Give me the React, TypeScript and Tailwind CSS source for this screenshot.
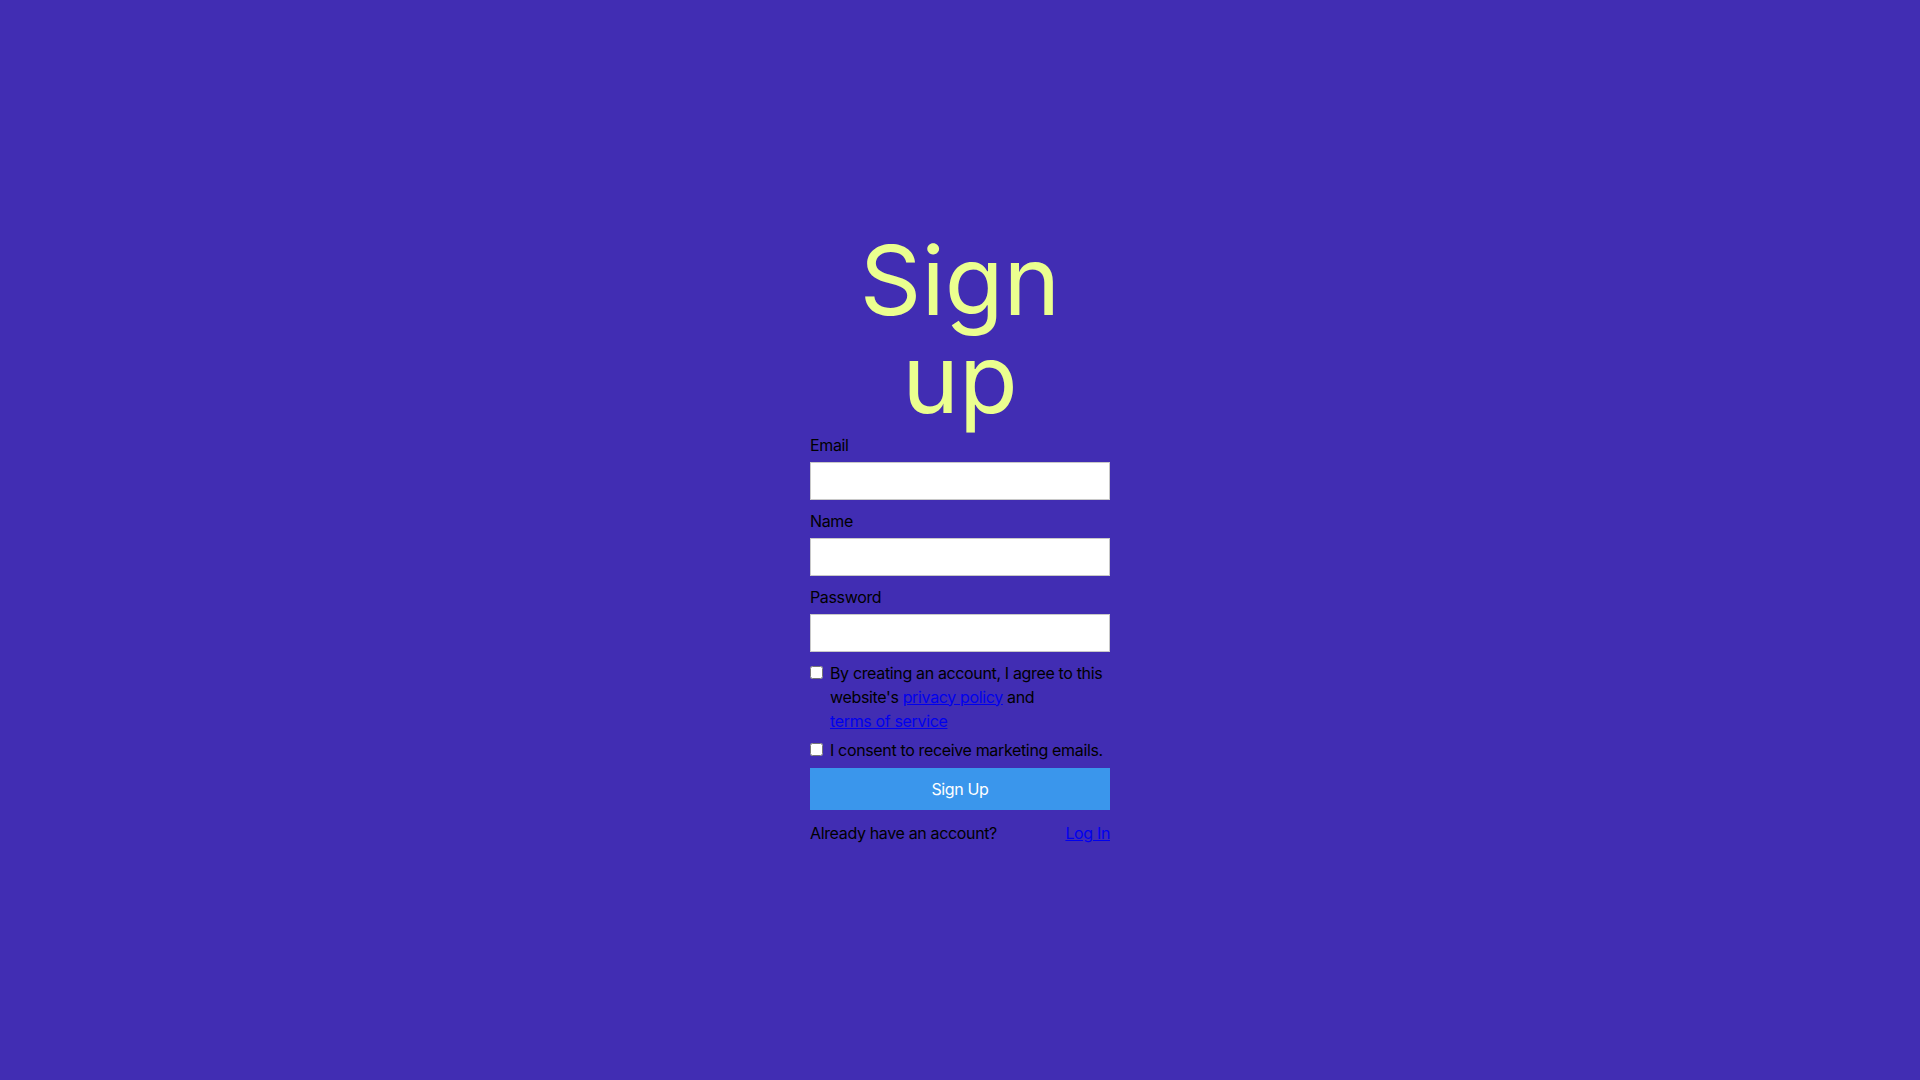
const fields = [
  { id: "email", label: "Email", type: "email" },
  { id: "name", label: "Name", type: "text" },
  { id: "password", label: "Password", type: "password" },
];

const App = () => {
  return (
    <div
      className="min-h-screen w-full bg-[#412db3] flex items-center justify-center text-black"
      style={{ fontFamily: "Inter, 'Noto Sans', sans-serif" }}
    >
      <form className="w-[300px] pb-[5px] flex flex-col tracking-[-0.35px]" onSubmit={(e) => e.preventDefault()}>
        <h1 className="text-center text-[96px] leading-[98px] font-normal tracking-normal text-[#ebff8f]">
          Sign up
        </h1>

        <div className="mt-[6px] flex flex-col gap-[9px]">
          {fields.map(({ id, label, type }) => (
            <div key={id} className="flex flex-col">
              <label htmlFor={id} className="text-base leading-6 mb-[5px]">
                {label}
              </label>
              <input
                id={id}
                type={type}
                className="h-[38px] w-full bg-white border border-[#c8c8c8] px-2 outline-none"
              />
            </div>
          ))}
        </div>

        <label className="mt-[9px] flex items-start gap-[7px] text-base leading-6">
          <input type="checkbox" className="mt-[5px] w-[13px] h-[13px] shrink-0" />
          <span>
            By creating an account, I agree to this website's{" "}
            <a href="#" className="text-[#0000ee] underline whitespace-nowrap">
              privacy policy
            </a>{" "}
            and{" "}
            <a href="#" className="text-[#0000ee] underline whitespace-nowrap">
              terms of service
            </a>
          </span>
        </label>

        <label className="mt-[5px] flex items-start gap-[7px] text-base leading-6">
          <input type="checkbox" className="mt-[5px] w-[13px] h-[13px] shrink-0" />
          <span className="whitespace-nowrap">I consent to receive marketing emails.</span>
        </label>

        <button
          type="submit"
          className="mt-[6px] h-[42px] w-full bg-[#3a96ec] text-white text-base"
        >
          Sign Up
        </button>

        <div className="mt-[11px] flex justify-between text-base leading-6">
          <span>Already have an account?</span>
          <a href="#" className="text-[#0000ee] underline">
            Log In
          </a>
        </div>
      </form>
    </div>
  );
};

export default App;
